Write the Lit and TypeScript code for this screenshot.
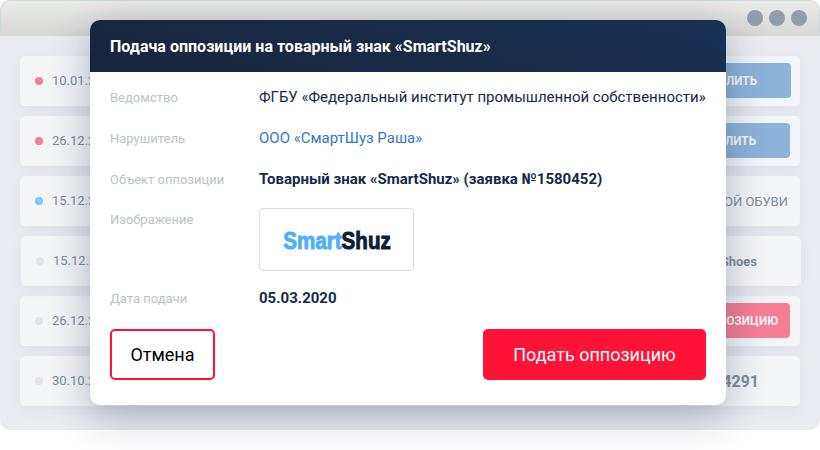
import { LitElement, html, css } from "lit";
import { customElement, property } from "lit/decorators.js";

type Row = {
  date: string;
  dot: "red" | "blue" | "grey";
  kind: "blue-btn" | "red-btn" | "text" | "name" | "number";
  text: string;
  end: number;
  pad?: number;
  shift?: boolean;
};

const ROWS: Row[] = [
  { date: "10.01.2020", dot: "red", kind: "blue-btn", text: "УДАЛИТЬ", end: 9, pad: 34 },
  { date: "26.12.2019", dot: "red", kind: "blue-btn", text: "УДАЛИТЬ", end: 10, pad: 34 },
  { date: "15.12.2019", dot: "blue", kind: "text", text: "МИР ДЕТСКОЙ ОБУВИ", end: 12 },
  { date: "15.12.2019", dot: "grey", kind: "name", text: "SmartShoes", end: 44, shift: true },
  { date: "26.12.2019", dot: "grey", kind: "red-btn", text: "ПОДАТЬ ОППОЗИЦИЮ", end: 10, pad: 12 },
  { date: "30.10.2019", dot: "grey", kind: "number", text: "№1574291", end: 41 },
];

@customElement("list-row")
class ListRow extends LitElement {
  @property({ attribute: false }) row!: Row;

  static styles = css`
    :host { display: block; }
    .row {
      height: 50px;
      box-sizing: border-box;
      display: flex;
      align-items: center;
      padding-left: 15px;
      border-radius: 5px;
      background: #f4f5f7;
      box-shadow: 0 4px 14px rgba(40, 50, 85, 0.055);
      color: #7f8c9c;
      white-space: nowrap;
    }
    .tinted { background: linear-gradient(90deg, #f4f5f7 75%, #f1f4fa 92%, #f3f5f9); }
    .shift { transform: translateX(1px); }
    .dot { width: 8px; height: 8px; border-radius: 50%; margin-right: 9px; }
    .dot.red { background: #f67c92; }
    .dot.blue { background: #74cdf0; }
    .dot.grey { background: #e2e4e9; }
    .date { font-size: 13px; flex: 1; padding-bottom: 1px; }
    .text { font-size: 13px; }
    .name { font-size: 13px; font-weight: 700; }
    .number { font-size: 16px; font-weight: 700; }
    .blue-btn, .red-btn {
      box-sizing: border-box;
      height: 35px;
      line-height: 35px;
      min-width: 140px;
      margin-bottom: 1px;
      text-align: right;
      border-radius: 4px;
      color: #f4f5f7;
      font-size: 13.5px;
      font-weight: 700;
    }
    .label { display: inline-block; transform: scaleX(0.87); transform-origin: right; }
    .blue-btn { background: #8eb3d8; }
    .red-btn { background: #f67e94; }
  `;

  render() {
    const r = this.row;
    const btn = r.kind.endsWith("btn");
    return html`<div class="row ${r.shift ? "shift" : ""} ${btn ? "tinted" : ""}">
      <span class="dot ${r.dot}"></span>
      <span class="date">${r.date}</span>
      <span class=${r.kind} style="margin-right:${r.end}px;padding-right:${r.pad ?? 0}px">
        ${btn ? html`<span class="label">${r.text}</span>` : r.text}</span>
    </div>`;
  }
}

@customElement("opposition-dialog")
class OppositionDialog extends LitElement {
  static styles = css`
    :host {
      display: flex;
      flex-direction: column;
      width: 636px;
      height: 385px;
      border-radius: 10px;
      background: #fff;
      color: #172a45;
      overflow: hidden;
      box-shadow: 0 10px 40px rgba(23, 40, 69, 0.33);
    }
    header {
      height: 52px;
      line-height: 53px;
      padding-left: 20px;
      background: linear-gradient(14deg, #17263e 10%, #172b47 50%, #183052 90%);
      color: #fff;
      font-size: 16px;
      font-weight: 700;
      letter-spacing: 0.01px;
    }
    .fields {
      display: grid;
      grid-template-columns: 149px 1fr;
      grid-template-rows: 41px 41px 41px 77px 41px;
      padding: 5px 20px 0;
      align-items: center;
      font-size: 15px;
      white-space: nowrap;
    }
    .key { color: #bcc2ca; font-size: 13px; }
    .key.top { align-self: start; margin-top: 12px; }
    .key.low { padding-top: 1px; }
    .value { padding-bottom: 2px; }
    .date { padding-bottom: 0; }
    .link { color: #3079bd; }
    .strong { font-weight: 700; }
    .logo {
      box-sizing: border-box;
      width: 155px;
      height: 63px;
      margin-top: 2px;
      border: 1px solid #dcdee1;
      border-radius: 4px;
      display: flex;
      align-items: center;
      justify-content: center;
    }
    .mark {
      font-family: "Liberation Sans", Arial, sans-serif;
      font-size: 24.5px;
      font-weight: 700;
      color: #0c2035;
      padding-top: 3px;
      -webkit-text-stroke: 1px currentColor;
      transform: scaleX(0.84);
    }
    .mark .light { color: #50b0fc; }
    .actions {
      display: flex;
      justify-content: space-between;
      padding: 11px 20px 0;
    }
    .button {
      box-sizing: border-box;
      height: 51px;
      display: flex;
      align-items: center;
      justify-content: center;
      border-radius: 5px;
      font-size: 18px;
      white-space: nowrap;
    }
    .cancel { width: 105px; border: 2px solid #ff1237; color: #000; }
    .submit { width: 223px; background: #ff1237; color: #fff; }
  `;

  render() {
    return html`
      <header><span>Подача оппозиции на товарный знак «SmartShuz»</span></header>
      <div class="fields">
        <span class="key">Ведомство</span>
        <span class="value">ФГБУ «Федеральный институт промышленной собственности»</span>
        <span class="key">Нарушитель</span>
        <span class="value link">ООО «СмартШуз Раша»</span>
        <span class="key">Объект оппозиции</span>
        <span class="value strong">Товарный знак «SmartShuz» (заявка №1580452)</span>
        <span class="key top">Изображение</span>
        <div class="logo"><span class="mark"><span class="light">Smart</span>Shuz</span></div>
        <span class="key low">Дата подачи</span>
        <span class="value date strong">05.03.2020</span>
      </div>
      <div class="actions">
        <div class="button cancel">Отмена</div>
        <div class="button submit">Подать оппозицию</div>
      </div>`;
  }
}

@customElement("app-root")
class AppRoot extends LitElement {
  static styles = css`
    :host {
      display: block;
      position: relative;
      width: 820px;
      height: 450px;
      overflow: hidden;
      background: #fff;
      font-family: Roboto, "Liberation Sans", sans-serif;
    }
    .window {
      height: 430px;
      border-radius: 10px;
      overflow: hidden;
      background: #ebecf1;
    }
    .bar {
      box-sizing: border-box;
      height: 36px;
      border: 1px solid #c9dadd;
      border-bottom: 0;
      border-radius: 10px 10px 0 0;
      background: linear-gradient(#ebebe9, #d6d6d6);
      display: flex;
      align-items: center;
      justify-content: flex-end;
      gap: 6px;
      padding-right: 12px;
    }
    .circle { width: 16px; height: 16px; margin-bottom: 1px; border-radius: 50%; background: #929eaa; }
    .rows {
      display: flex;
      flex-direction: column;
      gap: 10px;
      padding: 20px;
    }
    .dialog { position: absolute; left: 90px; top: 20px; }
  `;

  render() {
    return html`
      <div class="window">
        <div class="bar">
          <span class="circle"></span><span class="circle"></span><span class="circle"></span>
        </div>
        <div class="rows">${ROWS.map((r) => html`<list-row .row=${r}></list-row>`)}</div>
      </div>
      <opposition-dialog class="dialog"></opposition-dialog>`;
  }
}
